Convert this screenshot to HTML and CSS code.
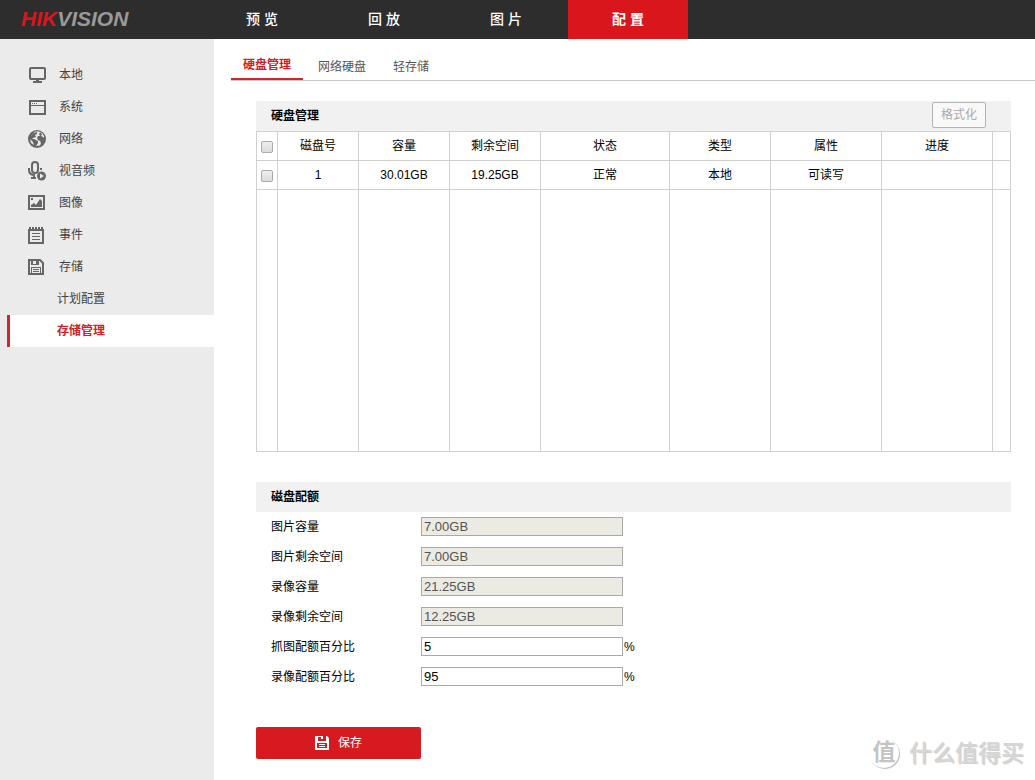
FILE: index.html
```html
<!DOCTYPE html>
<html lang="zh-CN">
<head>
<meta charset="utf-8">
<title>存储管理</title>
<link rel="stylesheet" href="styles.css">
</head>
<body>
<header class="topbar">
  <a class="logo" href="#"><span class="logo-red">HIK</span>VISION</a>
  <nav class="topnav">
    <a href="#">预 览</a>
    <a href="#">回 放</a>
    <a href="#">图 片</a>
    <a href="#" class="active">配 置</a>
  </nav>
</header>
<div class="layout">
  <nav class="sidebar">
    <a href="#" class="side-item">
      <svg class="icon" viewBox="0 0 20 20"><rect x="3" y="3" width="15" height="11" rx="1" fill="none" stroke="#666" stroke-width="2"/><path d="M9 14h3v2h3v2H6v-2h3z" fill="#666"/></svg>本地</a>
    <a href="#" class="side-item">
      <svg class="icon" viewBox="0 0 20 20"><rect x="3" y="4" width="15" height="13" fill="none" stroke="#666" stroke-width="2"/><path d="M3 8.5h15" stroke="#666"/><path d="M5 6.500h1M7 6.500h1M9 6.500h1" stroke="#666"/></svg>系统</a>
    <a href="#" class="side-item">
      <svg class="icon" viewBox="0 0 20 20"><circle cx="10" cy="10" r="9" fill="#666"/><path d="M4 7L7 4 10 3 10 5 8 6 9 8 6 9 5 10 7 10 9 11 11 12 11 14 9 17 13 16.500 14 14 13 12 11 11 10 9 11 7 13 7 12 5 13 3.500 15 5 14 7 16 8 17 9 17 7 15 4 12 2.500 8 2.500zM3 10L6 13 7 16 4 14z" fill="#ebebeb"/></svg>网络</a>
    <a href="#" class="side-item">
      <svg class="icon" viewBox="0 0 20 20"><rect x="5" y="1" width="6" height="11" rx="3" fill="none" stroke="#666" stroke-width="2"/><path d="M2 7v2c0 3 2 5 6 5M4 17h5M7 14v3" fill="none" stroke="#666" stroke-width="2"/><path d="M13 7h2v2h-2z" fill="#666"/><circle cx="14.500" cy="15" r="4.500" fill="#666"/><path d="M13 12.500v5l4-2.500z" fill="#ebebeb"/></svg>视音频</a>
    <a href="#" class="side-item">
      <svg class="icon" viewBox="0 0 20 20"><rect x="2" y="3" width="15" height="13" fill="none" stroke="#666" stroke-width="2"/><path d="M4 14V12l3-2 2 2 4-6 2 2v6z" fill="#666"/><path d="M4 5h2v2H4z" fill="#666"/></svg>图像</a>
    <a href="#" class="side-item">
      <svg class="icon" viewBox="0 0 20 20"><rect x="2" y="5" width="14" height="13" fill="none" stroke="#666" stroke-width="2"/><path d="M3 2v4M6 2v4M9 2v4M12 2v4M15 2v4" stroke="#666" stroke-width="2"/><path d="M5 8.500h8M5 11.500h8M5 14.500h8" stroke="#666"/></svg>事件</a>
    <a href="#" class="side-item">
      <svg class="icon" viewBox="0 0 20 20"><path d="M2 3h11l3 3v11H2z" fill="none" stroke="#666" stroke-width="2"/><path d="M4 3h2v4H4zM9 3h2v4H9zM11 3h1v4h-1zM4 7h8v1H4zM4 10h10v1H4zM4 10h1v7H4zM13 10h1v7h-1zM6 12h6v1H6zM6 14h6v1H6z" fill="#666"/></svg>存储</a>
    <a href="#" class="side-item sub">计划配置</a>
    <a href="#" class="side-item sub active">存储管理</a>
  </nav>
  <main class="main">
    <nav class="tabs">
      <a href="#" class="active">硬盘管理</a>
      <a href="#">网络硬盘</a>
      <a href="#">轻存储</a>
    </nav>
    <div class="content">
      <section>
        <div class="panel-head"><h2>硬盘管理</h2><button type="button" class="format" disabled>格式化</button></div>
        <table class="disks">
          <colgroup><col class="c-check"><col class="c-no"><col class="c-size"><col class="c-size"><col class="c-state"><col class="c-type"><col class="c-attr"><col class="c-attr"><col class="c-end"></colgroup>
          <thead>
            <tr><th><input type="checkbox" aria-label="全选"></th><th>磁盘号</th><th>容量</th><th>剩余空间</th><th>状态</th><th>类型</th><th>属性</th><th>进度</th><th></th></tr>
          </thead>
          <tbody>
            <tr><td><input type="checkbox" aria-label="磁盘 1"></td><td>1</td><td>30.01GB</td><td>19.25GB</td><td>正常</td><td>本地</td><td>可读写</td><td></td><td></td></tr>
            <tr class="blank"><td></td><td></td><td></td><td></td><td></td><td></td><td></td><td></td><td></td></tr>
          </tbody>
        </table>
      </section>
      <form class="quota">
        <div class="panel-head"><h2>磁盘配额</h2></div>
        <div class="field"><label for="q1">图片容量</label><input id="q1" type="text" value="7.00GB" disabled></div>
        <div class="field"><label for="q2">图片剩余空间</label><input id="q2" type="text" value="7.00GB" disabled></div>
        <div class="field"><label for="q3">录像容量</label><input id="q3" type="text" value="21.25GB" disabled></div>
        <div class="field"><label for="q4">录像剩余空间</label><input id="q4" type="text" value="12.25GB" disabled></div>
        <div class="field"><label for="q5">抓图配额百分比</label><input id="q5" type="text" value="5"><span>%</span></div>
        <div class="field"><label for="q6">录像配额百分比</label><input id="q6" type="text" value="95"><span>%</span></div>
        <button type="button" class="save">
          <svg class="save-icon" viewBox="0 0 14 14"><path d="M0 0h3v5h8V0h1l2 2v12H0zM2 7v5h10V7z" fill="#fff" fill-rule="evenodd"/><path d="M6 0h2v3H6zM3 0h3v1H3zM4 8h6v1H4zM4 10h6v1H4z" fill="#fff"/></svg>保存</button>
      </form>
    </div>
  </main>
</div>
<div class="watermark"><span class="seal">值</span><span>什么值得买</span></div>
</body>
</html>
```
FILE: styles.css
```css
* { box-sizing: border-box; }
body {
  margin: 0;
  background: #fff;
  color: #000;
  font: 12px/20px "Liberation Sans", "Noto Sans CJK SC", sans-serif;
  position: relative;
}
a { color: inherit; text-decoration: none; }
.topbar {
  display: flex;
  height: 39px;
  background: #2d2d2d;
}
.logo {
  width: 202px;
  padding-left: 21px;
  color: #999;
  font-size: 21px;
  font-weight: bold;
  font-style: italic;
  line-height: 38px;
}
.logo-red { color: #d9161d; }
.topnav { display: flex; gap: 2px; }
.topnav a {
  width: 120px;
  text-align: center;
  color: #fff;
  font-size: 14px;
  font-weight: 500;
  line-height: 39px;
}
.topnav .active { background: #d9161b; font-weight: bold; }
.layout { display: flex; min-height: calc(100vh - 39px); }
.sidebar {
  flex: none;
  width: 214px;
  padding-top: 20px;
  background: #ebebeb;
}
.side-item {
  display: flex;
  align-items: center;
  gap: 12px;
  height: 32px;
  padding-left: 27px;
  color: #444;
}
.icon { width: 20px; height: 20px; }
.side-item.sub { padding-left: 57px; line-height: 22px; }
.side-item.sub.active {
  margin-left: 7px;
  padding-left: 47px;
  border-left: 3px solid #d0262f;
  background: #fff;
  color: #cc2229;
  font-weight: bold;
}
.main { flex: 1; min-width: 0; padding-top: 16px; }
.tabs {
  display: flex;
  gap: 3px;
  margin-left: 17px;
  border-bottom: 1px solid #c8c8c8;
}
.tabs a {
  height: 25px;
  padding: 2px 12px 0;
  color: #555;
}
.tabs .active {
  padding-top: 0;
  border-bottom: 2px solid #d0262f;
  color: #cc2229;
  font-weight: bold;
}
.content { padding: 20px 24px 21px 42px; }
.panel-head {
  display: flex;
  align-items: center;
  justify-content: space-between;
  height: 30px;
  padding: 0 25px 0 15px;
  background: #f1f1f1;
}
h2 { margin: 0; font-size: 12px; font-weight: bold; }
button { font: inherit; }
.format {
  width: 54px;
  height: 26px;
  margin-bottom: 2px;
  padding: 0;
  border: 1px solid #b3b3b3;
  border-radius: 2px;
  background: #f9f9f9;
  color: #aaa;
}
.disks {
  width: 100%;
  table-layout: fixed;
  border-collapse: collapse;
}
.disks th, .disks td {
  height: 29px;
  padding: 0;
  border: 1px solid #d0d0d0;
  text-align: center;
  font-weight: normal;
}
.disks .blank td { height: 262px; }
.c-check { width: 21px; }
.c-no { width: 81px; }
.c-size { width: 91px; }
.c-state { width: 129px; }
.c-type { width: 101px; }
.c-attr { width: 111px; }
.c-end { width: 18px; }
.disks input {
  appearance: none;
  display: block;
  width: 12px;
  height: 12px;
  margin: 2px auto 0;
  border: 1px solid #aaa;
  border-radius: 2px;
  background: linear-gradient(#eee, #dcdcdc);
}
.quota { margin-top: 30px; }
.field {
  display: flex;
  align-items: flex-start;
  height: 30px;
  padding: 5px 0 0 15px;
}
.field label { width: 150px; }
.field input {
  width: 202px;
  height: 19px;
  padding: 0 2px;
  border: 1px solid #a9a9a9;
  background: #fff;
  color: #000;
  font: 13px/17px "Liberation Sans", sans-serif;
}
.field input:disabled { background: #ebebe4; color: #545454; }
.field span { margin-left: 1px; }
.save {
  display: flex;
  align-items: center;
  justify-content: center;
  gap: 9px;
  width: 165px;
  height: 32px;
  margin-top: 35px;
  padding: 0;
  border: 0;
  border-radius: 2px;
  background: #d71a20;
  color: #fff;
}
.save-icon { width: 14px; height: 14px; }
.watermark {
  position: absolute;
  right: 11px;
  bottom: 11px;
  display: flex;
  align-items: center;
  gap: 10px;
  color: #d6d6d6;
  font-size: 23px;
  font-weight: 500;
  line-height: 32px;
  text-shadow: 1px 1px 1px #ccc;
  pointer-events: none;
}
.seal {
  width: 30px;
  height: 30px;
  border-radius: 50%;
  box-shadow: 1px 1px 1px #bbb;
  color: #c4c4c4;
  font-weight: bold;
  line-height: 28px;
  text-align: center;
  text-shadow: none;
}
```
